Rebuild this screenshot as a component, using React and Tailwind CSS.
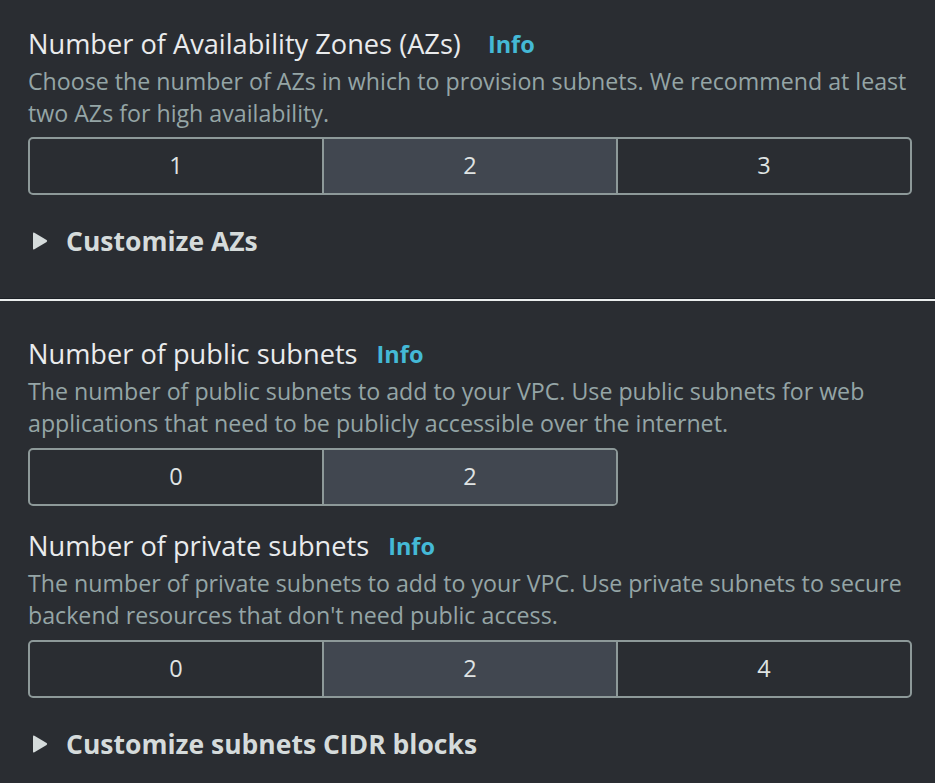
import React from "react";

const font = { fontFamily: '"Open Sans", "Noto Sans", sans-serif' };

function Info({ gap }) {
  return <span className={`${gap} text-[23.5px] font-bold text-[#44b9d6]`}>Info</span>;
}

function Segmented({ options, selected, width }) {
  return (
    <div className={`flex h-[58px] rounded-[5px] border-2 border-[#8d9999] overflow-hidden ${width}`}>
      {options.map((o, i) => (
        <div
          key={o}
          className={`flex-1 flex items-center justify-center text-[23.5px] text-[#dfe3e3] ${i > 0 ? "border-l-2 border-[#8d9999]" : ""} ${o === selected ? "bg-[#414750]" : ""}`}
        >
          {o}
        </div>
      ))}
    </div>
  );
}

function Expander({ label }) {
  return (
    <div className="flex items-center h-[32px]">
      <svg width="18" height="20" viewBox="0 0 18 20" className="ml-[3px] mr-[17px]">
        <path d="M2 2.5 Q2 1 3.4 1.8 L15.6 9 Q16.8 10 15.6 11 L3.4 18.2 Q2 19 2 17.5 Z" fill="#d5dbdb" />
      </svg>
      <span className="text-[26.5px] font-bold text-[#d5dbdb] leading-[32px]">{label}</span>
    </div>
  );
}

function Field({ title, desc, options, selected, width, gap, ctrlGap }) {
  return (
    <div>
      <div className="flex items-center h-[32px] leading-[32px]">
        <span className="text-[27.2px] text-[#e9ebed]">{title}</span>
        <Info gap={gap} />
      </div>
      <p className="mt-[5px] text-[23.2px] leading-[32px] text-[#95a5a6]">{desc}</p>
      <div className={ctrlGap}>
        <Segmented options={options} selected={selected} width={width} />
      </div>
    </div>
  );
}

export default function App() {
  return (
    <div className="w-[935px] h-[783px] bg-[#2a2d32] overflow-hidden" style={font}>
      <div className="pl-[28px] pr-[23px] pt-[28px] pb-[41px]">
        <Field
          title="Number of Availability Zones (AZs)"
          desc="Choose the number of AZs in which to provision subnets. We recommend at least two AZs for high availability."
          options={["1", "2", "3"]}
          selected="2"
          width="w-full"
          gap="ml-[27px]"
          ctrlGap="mt-[8px]"
        />
        <div className="mt-[30px]">
          <Expander label="Customize AZs" />
        </div>
      </div>
      <div className="h-[1px] bg-[#1b1f25]" />
      <div className="h-[2px] bg-[#eaeded]" />
      <div className="pl-[28px] pr-[23px] pt-[37px]">
        <Field
          title="Number of public subnets"
          desc="The number of public subnets to add to your VPC. Use public subnets for web applications that need to be publicly accessible over the internet."
          options={["0", "2"]}
          selected="2"
          width="w-[590px]"
          gap="ml-[19px]"
          ctrlGap="mt-[9px]"
        />
        <div className="mt-[24px]">
          <Field
            title="Number of private subnets"
            desc="The number of private subnets to add to your VPC. Use private subnets to secure backend resources that don't need public access."
            options={["0", "2", "4"]}
            selected="2"
            width="w-full"
            gap="ml-[19px]"
            ctrlGap="mt-[9px]"
          />
        </div>
        <div className="mt-[30px]">
          <Expander label="Customize subnets CIDR blocks" />
        </div>
      </div>
    </div>
  );
}
